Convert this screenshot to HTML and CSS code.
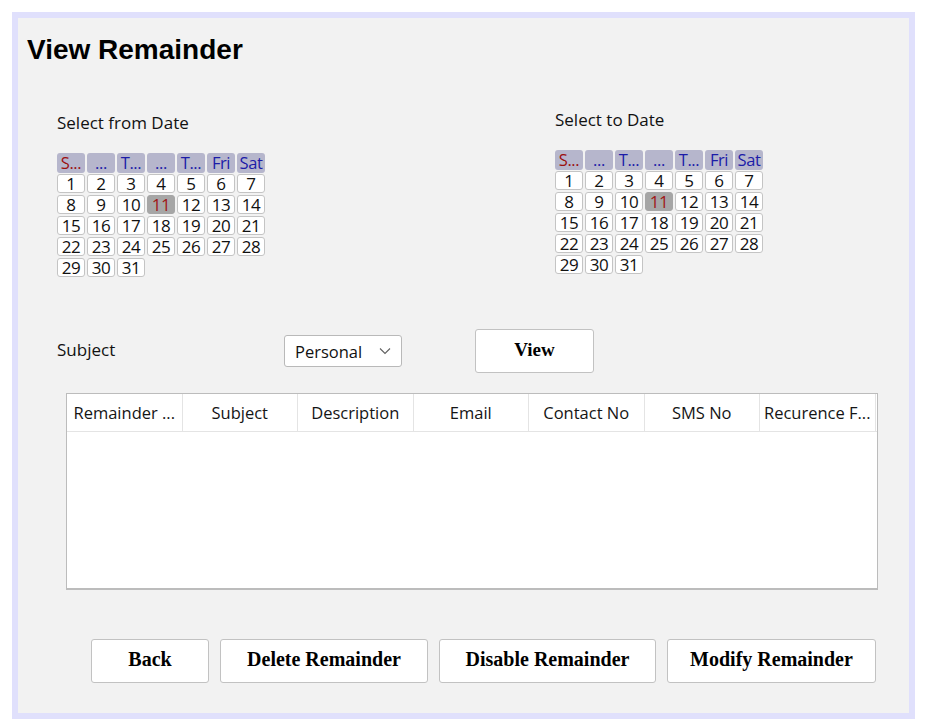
FILE: index.html
```html
<!DOCTYPE html>
<html>
<head>
<meta charset="utf-8">
<link rel="stylesheet" href="styles.css">
</head>
<body>
<div class="frame">
  <h1 class="title">View Remainder</h1>
  <div class="dates">
    <div class="date-col from">
      <div class="label">Select from Date</div>
      <div class="cal">
        <div class="hd sun">S...</div><div class="hd">...</div><div class="hd">T...</div><div class="hd">...</div><div class="hd">T...</div><div class="hd">Fri</div><div class="hd">Sat</div>
        <div class="d">1</div><div class="d">2</div><div class="d">3</div><div class="d">4</div><div class="d">5</div><div class="d">6</div><div class="d">7</div>
        <div class="d">8</div><div class="d">9</div><div class="d">10</div><div class="d sel">11</div><div class="d">12</div><div class="d">13</div><div class="d">14</div>
        <div class="d">15</div><div class="d">16</div><div class="d">17</div><div class="d">18</div><div class="d">19</div><div class="d">20</div><div class="d">21</div>
        <div class="d">22</div><div class="d">23</div><div class="d">24</div><div class="d">25</div><div class="d">26</div><div class="d">27</div><div class="d">28</div>
        <div class="d">29</div><div class="d">30</div><div class="d">31</div>
      </div>
    </div>
    <div class="date-col to">
      <div class="label">Select to Date</div>
      <div class="cal">
        <div class="hd sun">S...</div><div class="hd">...</div><div class="hd">T...</div><div class="hd">...</div><div class="hd">T...</div><div class="hd">Fri</div><div class="hd">Sat</div>
        <div class="d">1</div><div class="d">2</div><div class="d">3</div><div class="d">4</div><div class="d">5</div><div class="d">6</div><div class="d">7</div>
        <div class="d">8</div><div class="d">9</div><div class="d">10</div><div class="d sel">11</div><div class="d">12</div><div class="d">13</div><div class="d">14</div>
        <div class="d">15</div><div class="d">16</div><div class="d">17</div><div class="d">18</div><div class="d">19</div><div class="d">20</div><div class="d">21</div>
        <div class="d">22</div><div class="d">23</div><div class="d">24</div><div class="d">25</div><div class="d">26</div><div class="d">27</div><div class="d">28</div>
        <div class="d">29</div><div class="d">30</div><div class="d">31</div>
      </div>
    </div>
  </div>
  <div class="subject-row">
    <div class="subject-label">Subject</div>
    <div class="select">
      <span>Personal</span>
      <svg class="chev" width="12" height="8" viewBox="0 0 12 8"><path d="M1 1.5 L6 6.5 L11 1.5" fill="none" stroke="#606060" stroke-width="1.1"/></svg>
    </div>
    <button class="btn view-btn">View</button>
  </div>
  <div class="grid">
    <div class="grid-head">
      <div class="col">Remainder ...</div>
      <div class="col">Subject</div>
      <div class="col">Description</div>
      <div class="col">Email</div>
      <div class="col">Contact No</div>
      <div class="col">SMS No</div>
      <div class="col">Recurence F...</div>
    </div>
  </div>
  <div class="actions">
    <button class="btn b-back">Back</button>
    <button class="btn b-del">Delete Remainder</button>
    <button class="btn b-dis">Disable Remainder</button>
    <button class="btn b-mod">Modify Remainder</button>
  </div>
</div>
</body>
</html>
```

FILE: styles.css
```css
html, body {
  margin: 0;
  padding: 0;
  background: #ffffff;
}
body {
  font-family: "Open Sans", "Noto Sans", sans-serif;
  color: #111111;
}
.frame {
  box-sizing: border-box;
  margin: 12px 0 0 12px;
  width: 903px;
  height: 707px;
  border: 6px solid #e0e0fc;
  background: #f2f2f2;
  display: flex;
  flex-direction: column;
}
.title {
  margin: 16px 0 0 9px;
  font-family: "Liberation Sans", Arial, sans-serif;
  font-weight: bold;
  font-size: 28px;
  line-height: 32px;
  color: #000;
}
.dates {
  display: grid;
  grid-template-columns: 498px 1fr;
  margin: 47px 0 0 39px;
}
.label {
  font-size: 17px;
  line-height: 20px;
  color: #111;
}
.date-col.to {
  margin-top: -3px;
}
.cal {
  margin-top: 20px;
  display: grid;
  grid-template-columns: repeat(7, 28px);
  grid-auto-rows: 19px;
  column-gap: 2px;
  row-gap: 2px;
}
.cal .hd, .cal .d {
  box-sizing: border-box;
  border-radius: 3px;
  text-align: center;
  font-size: 17px;
  line-height: 17px;
  white-space: nowrap;
}
.cal .hd {
  background: #b6b6cc;
  color: #1c1ca8;
  line-height: 20px;
  height: 20px;
  font-size: 16.5px;
  letter-spacing: -0.4px;
}
.cal .hd.sun {
  color: #9c1010;
}
.cal .d {
  background: #ffffff;
  border: 1px solid #c4c4c4;
  color: #111;
  letter-spacing: -0.4px;
}
.cal .d.sel {
  background: #a6a6a6;
  border-color: #a6a6a6;
  color: #a01818;
}
.subject-row {
  display: flex;
  align-items: center;
  margin: 52px 0 0 39px;
  height: 43px;
}
.subject-label {
  width: 227px;
  font-size: 17px;
  line-height: 20px;
  margin-top: -1px;
}
.select {
  box-sizing: border-box;
  width: 118px;
  height: 32px;
  margin-top: 1px;
  background: #fff;
  border: 1px solid #b9b9b9;
  border-radius: 3px;
  display: flex;
  align-items: center;
  justify-content: space-between;
  padding: 0 10px 0 10px;
  font-size: 16.5px;
}
.chev {
  display: block;
}
.btn {
  box-sizing: border-box;
  background: #ffffff;
  border: 1px solid #c2c2c2;
  border-radius: 3px;
  font-family: "Liberation Serif", "Times New Roman", serif;
  font-weight: bold;
  font-size: 20px;
  color: #000;
  height: 44px;
  padding: 0 0 3px 0;
  cursor: pointer;
}
.view-btn {
  width: 119px;
  margin-left: 73px;
  font-size: 19px;
  padding-bottom: 1px;
}
.grid {
  box-sizing: border-box;
  margin: 21px 0 0 48px;
  width: 812px;
  height: 197px;
  background: #ffffff;
  border: 1px solid #bcbcbc;
  border-bottom-width: 2px;
}
.grid-head {
  display: grid;
  grid-template-columns: repeat(7, 115.5px);
  height: 37px;
  border-bottom: 1px solid #e4e4e4;
}
.grid-head .col {
  box-sizing: border-box;
  border-right: 1px solid #e4e4e4;
  text-align: center;
  font-size: 16.5px;
  line-height: 37px;
  white-space: nowrap;
  overflow: hidden;
  color: #151515;
}
.actions {
  display: flex;
  gap: 11px;
  margin: 49px 0 0 73px;
}
.b-back { width: 118px; }
.b-del { width: 208px; }
.b-dis { width: 217px; }
.b-mod { width: 209px; }
```
